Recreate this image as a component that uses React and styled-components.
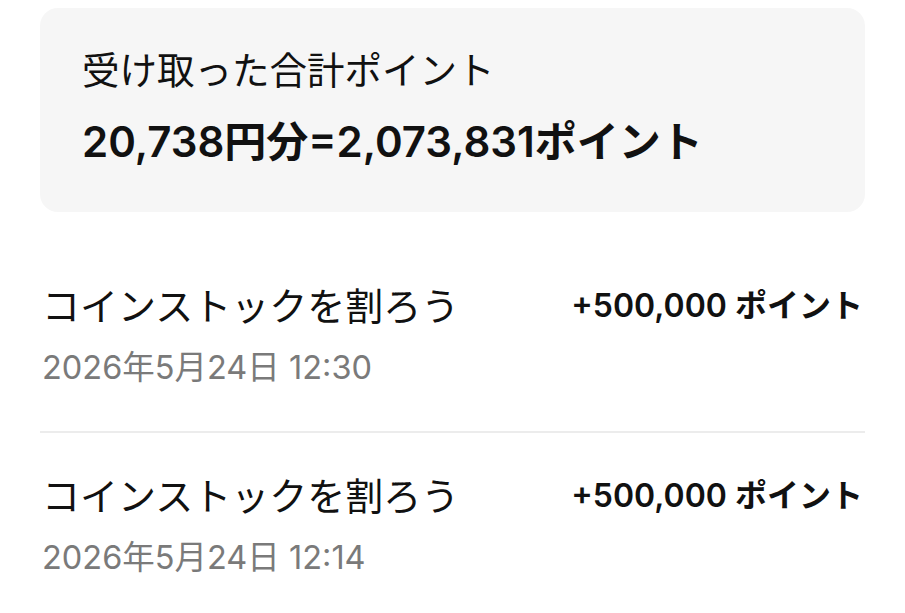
import React from "react";
import styled, { createGlobalStyle } from "styled-components";

const GlobalStyle = createGlobalStyle`
  html, body {
    margin: 0;
    padding: 0;
    background: #ffffff;
  }
  body {
    font-family: "Inter", "Noto Sans CJK JP", sans-serif;
    color: #111111;
  }
`;

const Page = styled.div`
  width: 905px;
  padding: 8px 40px 0 40px;
  box-sizing: border-box;
`;

const SummaryCard = styled.div`
  background: #f6f6f6;
  border-radius: 18px;
  padding: 43px 42px 46px 42px;
  display: flex;
  flex-direction: column;
  gap: 27px;
`;

const SummaryLabel = styled.div`
  font-size: 37.5px;
  line-height: 40px;
  font-weight: 400;
`;

const SummaryValue = styled.div`
  font-size: 42px;
  line-height: 48px;
  font-weight: 600;
`;

const List = styled.div`
  margin-top: 56px;
  display: flex;
  flex-direction: column;
`;

const Row = styled.div`
  display: flex;
  flex-direction: column;
  gap: 20px;
  padding: 16px 2px 43px 2px;
  border-bottom: ${(p) => (p.$last ? "none" : "2px solid #ececec")};
  & + & {
    padding-top: 41px;
  }
`;

const TopLine = styled.div`
  display: flex;
  justify-content: space-between;
  align-items: center;
`;

const Title = styled.div`
  font-size: 38px;
  line-height: 44px;
  font-weight: 400;
`;

const Amount = styled.div`
  font-size: 32px;
  line-height: 44px;
  font-weight: 600;
`;

const DateText = styled.div`
  font-size: 32.5px;
  line-height: 40px;
  color: #7a7a7a;
`;

const items = [
  { title: "コインストックを割ろう", amount: "+500,000 ポイント", date: "2026年5月24日 12:30" },
  { title: "コインストックを割ろう", amount: "+500,000 ポイント", date: "2026年5月24日 12:14" },
];

export default function App() {
  return (
    <>
      <GlobalStyle />
      <Page>
        <SummaryCard>
          <SummaryLabel>受け取った合計ポイント</SummaryLabel>
          <SummaryValue>20,738円分=2,073,831ポイント</SummaryValue>
        </SummaryCard>
        <List>
          {items.map((it, i) => (
            <Row key={i} $last={i === items.length - 1}>
              <TopLine>
                <Title>{it.title}</Title>
                <Amount>{it.amount}</Amount>
              </TopLine>
              <DateText>{it.date}</DateText>
            </Row>
          ))}
        </List>
      </Page>
    </>
  );
}
